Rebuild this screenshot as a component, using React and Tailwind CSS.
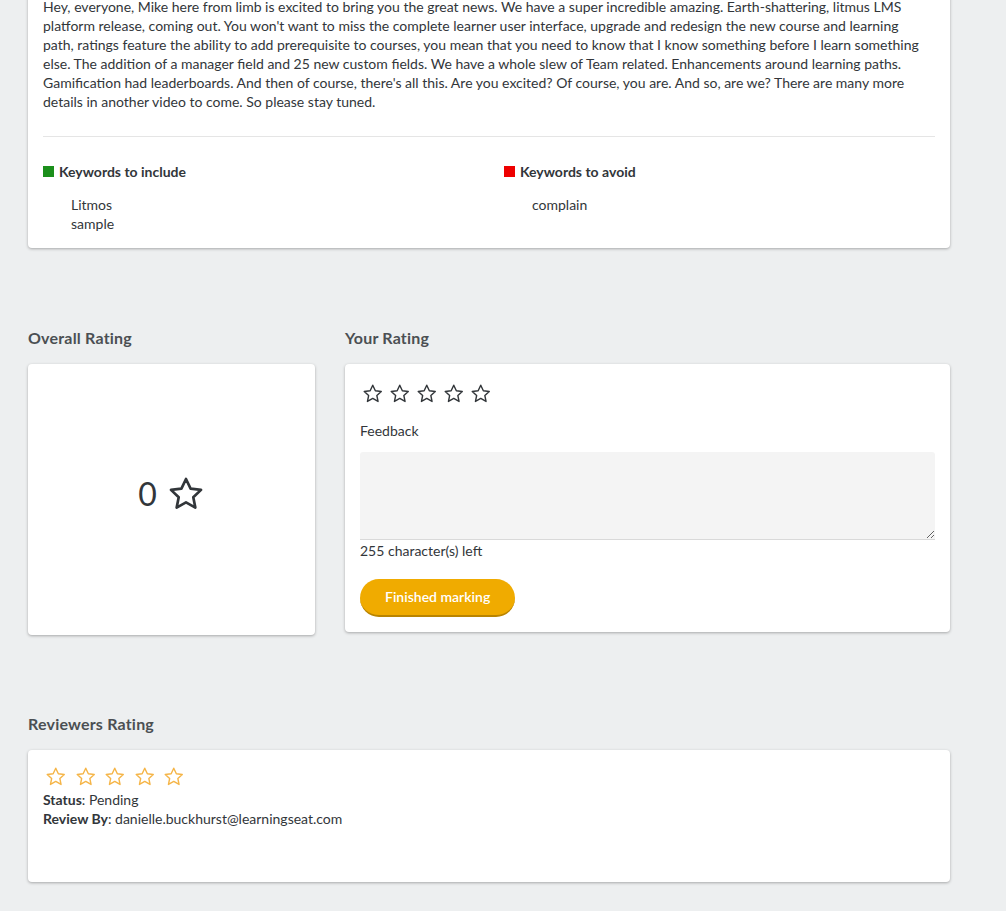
import React from 'react';

const font = { fontFamily: 'Lato, "Noto Sans", Arial, sans-serif' };

function Star({ size = 20, color = '#32363a', width = 1.6 }) {
  return (
    <svg width={size} height={size} viewBox="0 0 24 24" fill="none" stroke={color} strokeWidth={width} strokeLinejoin="round">
      <path d="M12 2.5l2.9 6.1 6.6.8-4.9 4.6 1.3 6.6L12 17.3l-5.9 3.3 1.3-6.6-4.9-4.6 6.6-.8z" />
    </svg>
  );
}

export default function App() {
  return (
    <div className="min-h-screen bg-[#edeff0] text-[#32363a] text-[14px] pb-8 overflow-hidden" style={font}>
      <div className="w-[922px] ml-[28px]">
        <div className="-mt-[19px] bg-white rounded shadow-[0_1px_3px_rgba(0,0,0,0.3)] px-[15px] pt-4 pb-[15px]">
          <p className="leading-[19px] pr-2">
            Hey, everyone, Mike here from limb is excited to bring you the great news. We have a super incredible amazing. Earth-shattering, litmus LMS platform release, coming out. You won't want to miss the complete learner user interface, upgrade and redesign the new course and learning path, ratings feature the ability to add prerequisite to courses, you mean that you need to know that I know something before I learn something else. The addition of a manager field and 25 new custom fields. We have a whole slew of Team related. Enhancements around learning paths. Gamification had leaderboards. And then of course, there's all this. Are you excited? Of course, you are. And so, are we? There are many more details in another video to come. So please stay tuned.
          </p>
          <div className="border-t border-[#e5e5e5] mt-[25px] pt-[25px] grid grid-cols-[461px_1fr]">
            <div>
              <div className="flex items-center gap-[5px] font-bold leading-[19px]">
                <span className="w-[11px] h-[11px] bg-[#1b8f1b] inline-block" />
                Keywords to include
              </div>
              <ul className="mt-[14px] pl-[28px] leading-[19px]">
                <li>Litmos</li>
                <li>sample</li>
              </ul>
            </div>
            <div>
              <div className="flex items-center gap-[5px] font-bold leading-[19px]">
                <span className="w-[11px] h-[11px] bg-[#ee0000] inline-block" />
                Keywords to avoid
              </div>
              <ul className="mt-[14px] pl-[28px] leading-[19px]">
                <li>complain</li>
              </ul>
            </div>
          </div>
        </div>

        <div className="mt-[80px] flex gap-[30px]">
          <div className="w-[287px]">
            <h2 className="text-[16px] font-bold text-[#4b4f53] leading-[20px] tracking-[0.2px]">Overall Rating</h2>
            <div className="mt-4 bg-white rounded shadow-[0_1px_3px_rgba(0,0,0,0.3)] h-[271px] pb-[12px] flex items-center justify-center gap-[10px]">
              <span className="text-[32px] leading-none text-[#32363a] pt-[1px]">0</span>
              <Star size={38} width={1.7} />
            </div>
          </div>
          <div className="w-[605px]">
            <h2 className="text-[16px] font-bold text-[#4b4f53] leading-[20px] tracking-[0.2px]">Your Rating</h2>
            <div className="mt-4 bg-white rounded shadow-[0_1px_3px_rgba(0,0,0,0.3)] px-[15px] pt-[19px] pb-[15px]">
              <div className="flex gap-[5.5px] pl-[2px]">
                {[0, 1, 2, 3, 4].map((i) => (
                  <Star key={i} size={21.5} />
                ))}
              </div>
              <div className="mt-[16px] leading-[19px]">Feedback</div>
              <textarea className="mt-[12px] block w-full h-[88px] bg-[#f4f4f4] border-b border-[#d9d9d9] rounded-t-[3px] resize-y outline-none" />
              <div className="leading-[19px] mt-[1px]">255 character(s) left</div>
              <button className="mt-[19px] h-[38px] px-[25px] rounded-full bg-[#f0ab00] text-white text-[14px] font-semibold border-b-2 border-[#b98400]">
                Finished marking
              </button>
            </div>
          </div>
        </div>

        <h2 className="mt-[79px] text-[16px] font-bold text-[#4b4f53] leading-[20px] tracking-[0.2px]">Reviewers Rating</h2>
        <div className="mt-4 bg-white rounded shadow-[0_1px_3px_rgba(0,0,0,0.3)] h-[132px] px-[15px] pt-[16px]">
          <div className="flex gap-[8px] pl-[2px]">
            {[0, 1, 2, 3, 4].map((i) => (
              <Star key={i} size={21.5} color="#f5b548" width={1.6} />
            ))}
          </div>
          <div className="leading-[19px] mt-[2px]">
            <div><b>Status</b>: Pending</div>
            <div><b>Review By</b>: danielle.buckhurst@learningseat.com</div>
          </div>
        </div>
      </div>
    </div>
  );
}
